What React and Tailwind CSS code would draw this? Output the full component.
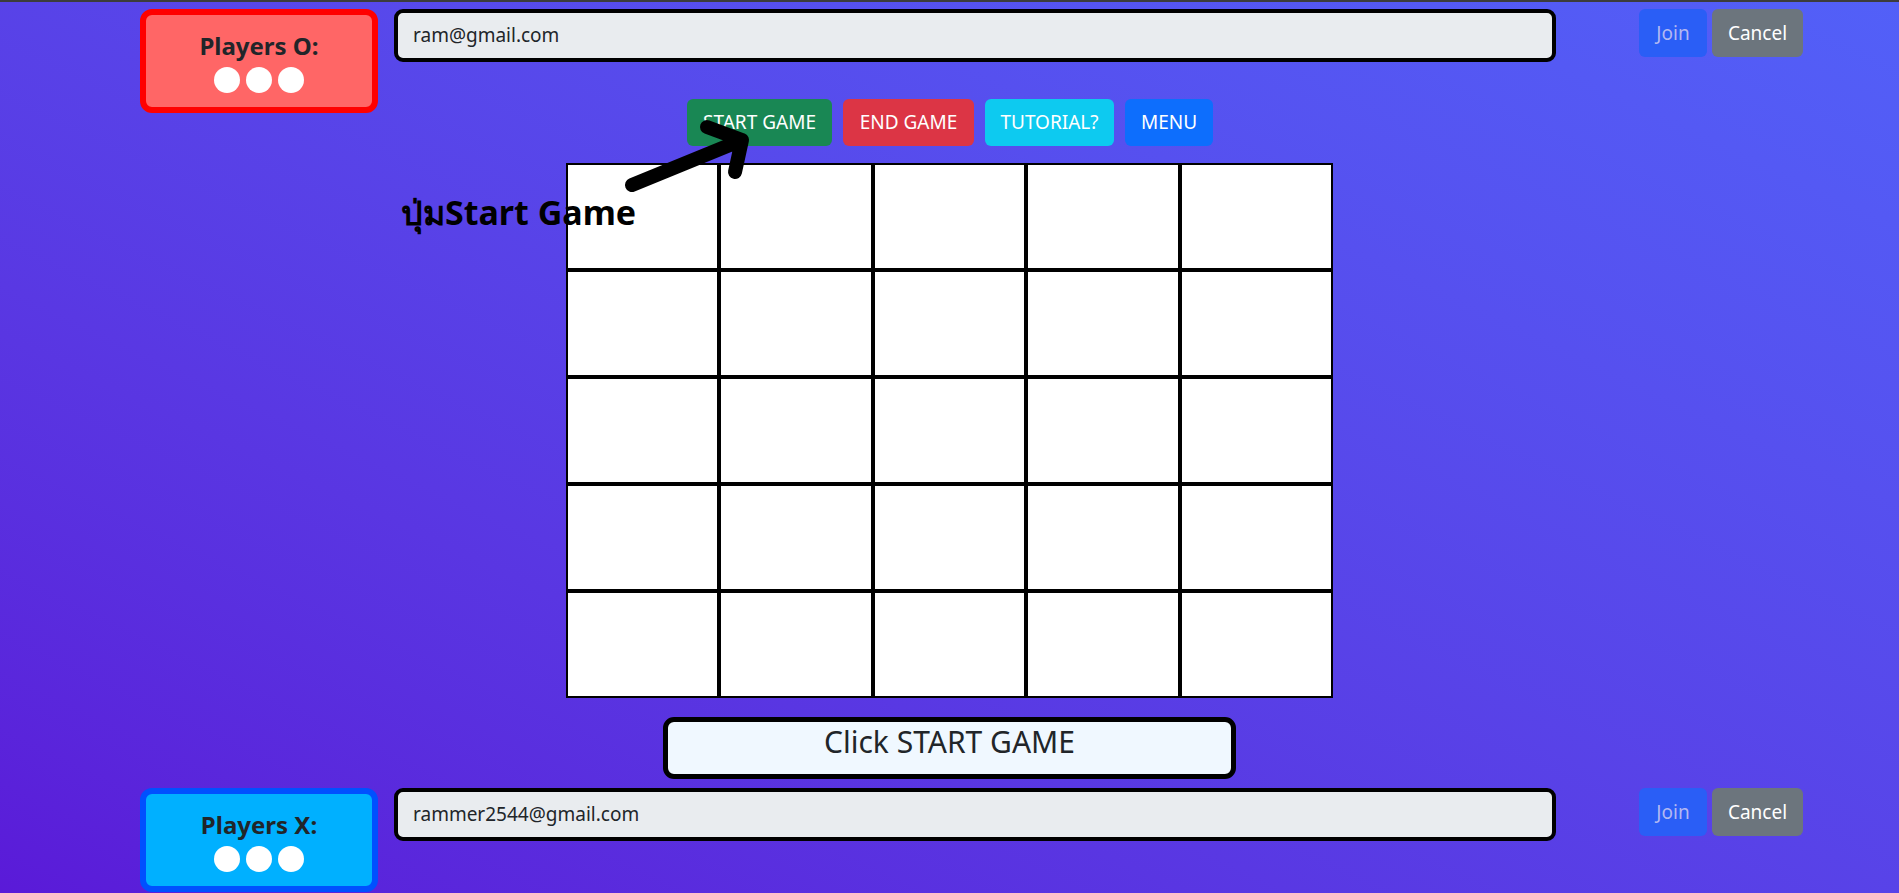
import React from "react";

const font = { fontFamily: '"Noto Sans", "Open Sans", sans-serif' };

const PlayerCard = ({ label, tone }) => {
  const colors =
    tone === "o"
      ? "bg-[#ff6666] border-[#ff0000]"
      : "bg-[#00b0ff] border-[#0050ff]";
  return (
    <div
      className={`w-[238px] h-[104px] shrink-0 rounded-[12px] border-[6px] ${colors} flex flex-col items-center pt-[16px]`}
    >
      <div className="text-[24px] leading-[30px] font-bold text-[#212529]">{label}</div>
      <div className="flex gap-[6px] mt-[6px]">
        <span className="w-[26px] h-[26px] rounded-full bg-white" />
        <span className="w-[26px] h-[26px] rounded-full bg-white" />
        <span className="w-[26px] h-[26px] rounded-full bg-white" />
      </div>
    </div>
  );
};

const PlayerRow = ({ label, tone, email }) => (
  <div className="flex items-start pl-[140px]">
    <PlayerCard label={label} tone={tone} />
    <div className="ml-[16px] w-[1162px] h-[53px] rounded-[9px] border-4 border-black bg-[#e9ecef] flex items-center px-[15px] text-[19px] text-[#212529]">
      {email}
    </div>
    <button className="ml-[83px] w-[68px] h-[48px] rounded-md bg-[#2a5ef6] text-[19px] text-[#b3b8f2]">
      Join
    </button>
    <button className="ml-[5px] w-[91px] h-[48px] rounded-md bg-[#6c757d] text-[19px] text-white">
      Cancel
    </button>
  </div>
);

const Board = () => {
  const cells = Array.from({ length: 25 });
  return (
    <div className="ml-[566px] w-[767px] grid grid-cols-5 bg-white">
      {cells.map((_, i) => (
        <div key={i} className="h-[107px] border-2 border-black bg-white" />
      ))}
    </div>
  );
};

const App = () => {
  return (
    <div
      className="relative min-h-screen h-[893px] overflow-hidden bg-linear-to-tr from-[#5a1ad8] to-[#5260f8]"
      style={font}
    >
      <div className="h-[2px] bg-[#3c3c3c]" />

      <div className="mt-[7px]">
        <PlayerRow label="Players O:" tone="o" email="ram@gmail.com" />
      </div>

      {/* game controls */}
      <div className="flex gap-[11px] pl-[687px] -mt-[14px]">
        <button className="w-[145px] h-[47px] rounded-md bg-[#198754] text-white text-[19px]">
          START GAME
        </button>
        <button className="w-[131px] h-[47px] rounded-md bg-[#dc3545] text-white text-[19px]">
          END GAME
        </button>
        <button className="w-[129px] h-[47px] rounded-md bg-[#0dcaf0] text-white text-[19px]">
          TUTORIAL?
        </button>
        <button className="w-[88px] h-[47px] rounded-md bg-[#0d6efd] text-white text-[19px]">
          MENU
        </button>
      </div>

      <div className="mt-[17px]">
        <Board />
      </div>

      <div className="mt-[19px] ml-[663px] w-[573px] h-[62px] rounded-[11px] border-[5px] border-black bg-[#f0f8ff] flex justify-center">
        <h3 className="text-[30px] leading-[40px] text-[#212529]">Click START GAME</h3>
      </div>

      <div className="mt-[9px]">
        <PlayerRow label="Players X:" tone="x" email="rammer2544@gmail.com" />
      </div>

      {/* annotation over the board */}
      <div className="absolute left-[401px] top-[190px] text-[34px] leading-[44px] font-bold text-black whitespace-nowrap">
        ปุ่มStart Game
      </div>
      <svg className="absolute left-0 top-0" width="900" height="240" viewBox="0 0 900 240">
        <path
          d="M632 185 L742 140 M707 127 L742 140 L735 172"
          fill="none"
          stroke="#000"
          strokeWidth="14"
          strokeLinecap="round"
          strokeLinejoin="round"
        />
      </svg>
    </div>
  );
};

export default App;
